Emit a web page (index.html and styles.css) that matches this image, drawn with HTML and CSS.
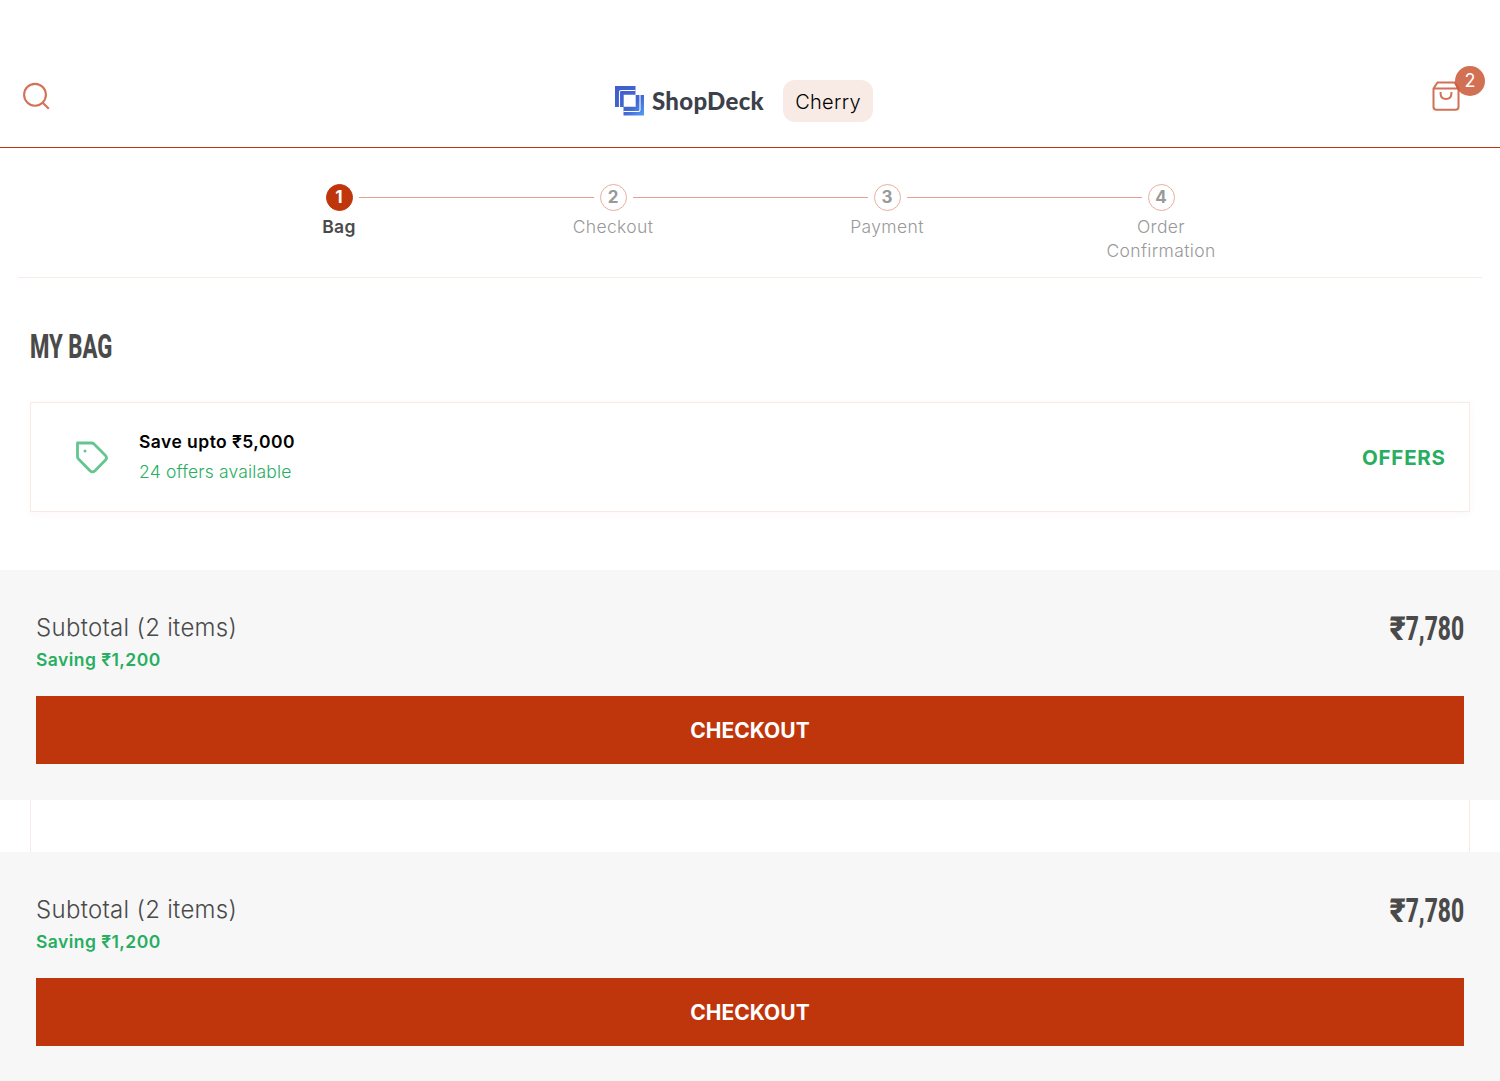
FILE: index.html
```html
<!DOCTYPE html>
<html lang="en">
<head>
<meta charset="utf-8">
<title>My Bag</title>
<link rel="stylesheet" href="styles.css">
</head>
<body>
<header class="header">
  <svg class="search" width="28" height="28" viewBox="0 0 28 28" fill="none" stroke="#d27155" stroke-width="2.1"><circle cx="13" cy="12.800" r="10.900"/><path d="M20.500 20.500 26.800 26.800"/></svg>
  <div class="brand">
    <svg width="30" height="31" viewBox="0 0 30 31" fill="none">
      <defs><linearGradient id="blue" x1="0" y1="0" x2="1" y2="1"><stop stop-color="#405ccc"/><stop offset=".65" stop-color="#4268d2"/><stop offset="1" stop-color="#559cf5"/></linearGradient></defs>
      <path fill="url(#blue)" fill-rule="evenodd" d="M0 0H20.500V9H29V29.500H8.500V21H0ZM8.700 8.700V20.800H20.700V8.700Z"/>
      <path stroke="#fff" stroke-width="1.100" d="M4.500 21V6Q4.500 4.500 6 4.500H20.500M25 9V24Q25 25.500 23.500 25.500H8.500"/>
    </svg>
    <span class="wordmark">ShopDeck</span>
    <span class="store"><span>Cherry</span></span>
  </div>
  <div class="bag">
    <svg class="bag-icon" width="28" height="32" viewBox="0 0 28 32" fill="none" stroke="#d27155" stroke-width="2"><path d="M1.500 8.500 5.500 2.500H22.500L26.500 8.500V27Q26.500 29.800 23.500 29.800H4.500Q1.500 29.800 1.500 27ZM1.500 8.500H26.500M8.600 12V14Q9 19 14 19T19.400 14V12"/></svg>
    <span class="badge">2</span>
  </div>
</header>
<main>
  <ol class="steps">
    <li class="step active"><span class="num">1</span><span class="label">Bag</span></li>
    <li class="step"><span class="num">2</span><span class="label">Checkout</span></li>
    <li class="step"><span class="num">3</span><span class="label">Payment</span></li>
    <li class="step"><span class="num">4</span><span class="label">Order<br>Confirmation</span></li>
  </ol>
  <h1 class="title"><span>MY BAG</span></h1>
  <section class="offers">
    <svg class="tag" width="34" height="34" viewBox="0 0 34 34" fill="none" stroke="#63c68f" stroke-width="2.800" stroke-linejoin="round"><path d="M2.500 2H16.500Q18 2 19 3L30.500 14.500Q32.500 17 30.500 19L20 29.800Q17.500 32 15 29.800L3.500 18Q2.500 17 2.500 15.500Z"/><circle cx="10" cy="10" r="1.500" fill="#63c68f" stroke="none"/></svg>
    <div class="offer-text"><strong>Save upto ₹5,000</strong><span>24 offers available</span></div>
    <a class="offers-link">OFFERS</a>
  </section>
  <section class="summary">
    <div class="row"><div><p class="subtotal">Subtotal (2 items)</p><p class="saving">Saving ₹1,200</p></div><span class="price"><span class="rupee">₹</span>7,780</span></div>
    <button class="checkout">CHECKOUT</button>
  </section>
  <div class="items"></div>
  <section class="summary">
    <div class="row"><div><p class="subtotal">Subtotal (2 items)</p><p class="saving">Saving ₹1,200</p></div><span class="price"><span class="rupee">₹</span>7,780</span></div>
    <button class="checkout">CHECKOUT</button>
  </section>
</main>
</body>
</html>
```
FILE: styles.css
```css
* { box-sizing: border-box; }
body { margin: 0; height: 1081px; overflow: hidden; background: #fff; color: #4a4a4a; font-family: Inter, "Noto Sans", sans-serif; font-weight: 300; }
p, h1, ol { margin: 0; padding: 0; }
.header { height: 148px; border-bottom: 1px solid #bd340d; display: grid; grid-template-columns: 1fr auto 1fr; padding: 80px 40px 0 22px; }
.search { margin-top: 2px; }
.brand { display: flex; align-items: center; height: 42px; width: 258px; margin: 0 -3px 0 3px; }
.wordmark { font: 900 24px/30px Lato, sans-serif; color: #3c404b; letter-spacing: .3px; width: 112px; margin: 0 19px 0 7px; flex: 1; white-space: nowrap; }
.store { width: 90px; height: 42px; border-radius: 12px; background: #f8ebe6; color: #000; font-size: 20px; letter-spacing: .3px; padding-top: 1px; display: flex; align-items: center; justify-content: center; }
.bag { justify-self: end; position: relative; width: 28px; height: 32px; }
.bag-icon { display: block; overflow: visible; }
.badge { position: absolute; left: 23px; top: -14px; width: 30px; height: 30px; border-radius: 50%; background: rgba(201, 88, 55, .86); color: #fff; font-size: 18px; font-weight: 400; line-height: 30px; text-align: center; }
.steps { list-style: none; display: grid; grid-template-columns: repeat(4, 274px); justify-content: center; height: 130px; margin: 0 18px; padding-top: 36px; border-bottom: 1px solid #f8ebe6; }
.step { position: relative; display: flex; flex-direction: column; align-items: center; color: #999; font-size: 17.5px; letter-spacing: .36px; line-height: 24px; text-align: center; }
.step:not(:last-child)::after { content: ""; position: absolute; left: 157px; top: 13px; width: 235px; height: 1px; background: #e5a08c; }
.num { width: 27px; height: 27px; border: 1px solid #e9ad9c; border-radius: 50%; font-size: 17px; font-weight: 700; letter-spacing: 0; line-height: 25px; margin-bottom: 4px; }
.active { color: #4a4a4a; }
.active .num { background: #bf360c; border-color: #bf360c; color: #fff; }
.active .label { font-weight: 600; }
.title { height: 124px; padding: 49px 30px 0; font: 800 33px/40px Roboto, sans-serif; }
.title span { display: inline-block; transform: scaleX(.67); transform-origin: left; }
.offers { margin: 0 30px; height: 110px; border: 1px solid #f8ebe6; box-shadow: 0 2px 8px rgba(191, 54, 12, .04); display: flex; align-items: center; padding: 0 24px 0 44px; }
.tag { margin-top: 2px; }
.offer-text { display: flex; flex-direction: column; margin-left: 30px; flex: 1; font-size: 17.5px; line-height: 30px; letter-spacing: .17px; }
.offer-text strong { color: #000; font-weight: 600; letter-spacing: .45px; }
.offer-text span { color: #27ae60; }
.offers-link { color: #27ae60; font-size: 20.5px; font-weight: 700; letter-spacing: .75px; margin-right: -.75px; }
.summary { height: 230px; background: #f7f7f7; padding: 40px 36px 36px; }
.offers + .summary { margin-top: 58px; }
.row { display: flex; justify-content: space-between; height: 86px; }
.subtotal { font-size: 24px; line-height: 36px; letter-spacing: .3px; }
.saving { font-size: 17.5px; line-height: 28px; font-weight: 600; letter-spacing: .45px; color: #27ae60; }
.price { font: 800 33px/38px Roboto, sans-serif; transform: scaleX(.69); transform-origin: right; }
.rupee { display: inline-block; transform: scaleX(1.35); transform-origin: right; }
.checkout { display: block; width: 100%; height: 68px; border: 0; padding: 1px 0 0; background: #bf360c; color: #fff; font: 700 21px Inter, sans-serif; }
.items { margin: 0 30px; height: 52px; border: solid #f8ebe6; border-width: 0 1px; }
```
